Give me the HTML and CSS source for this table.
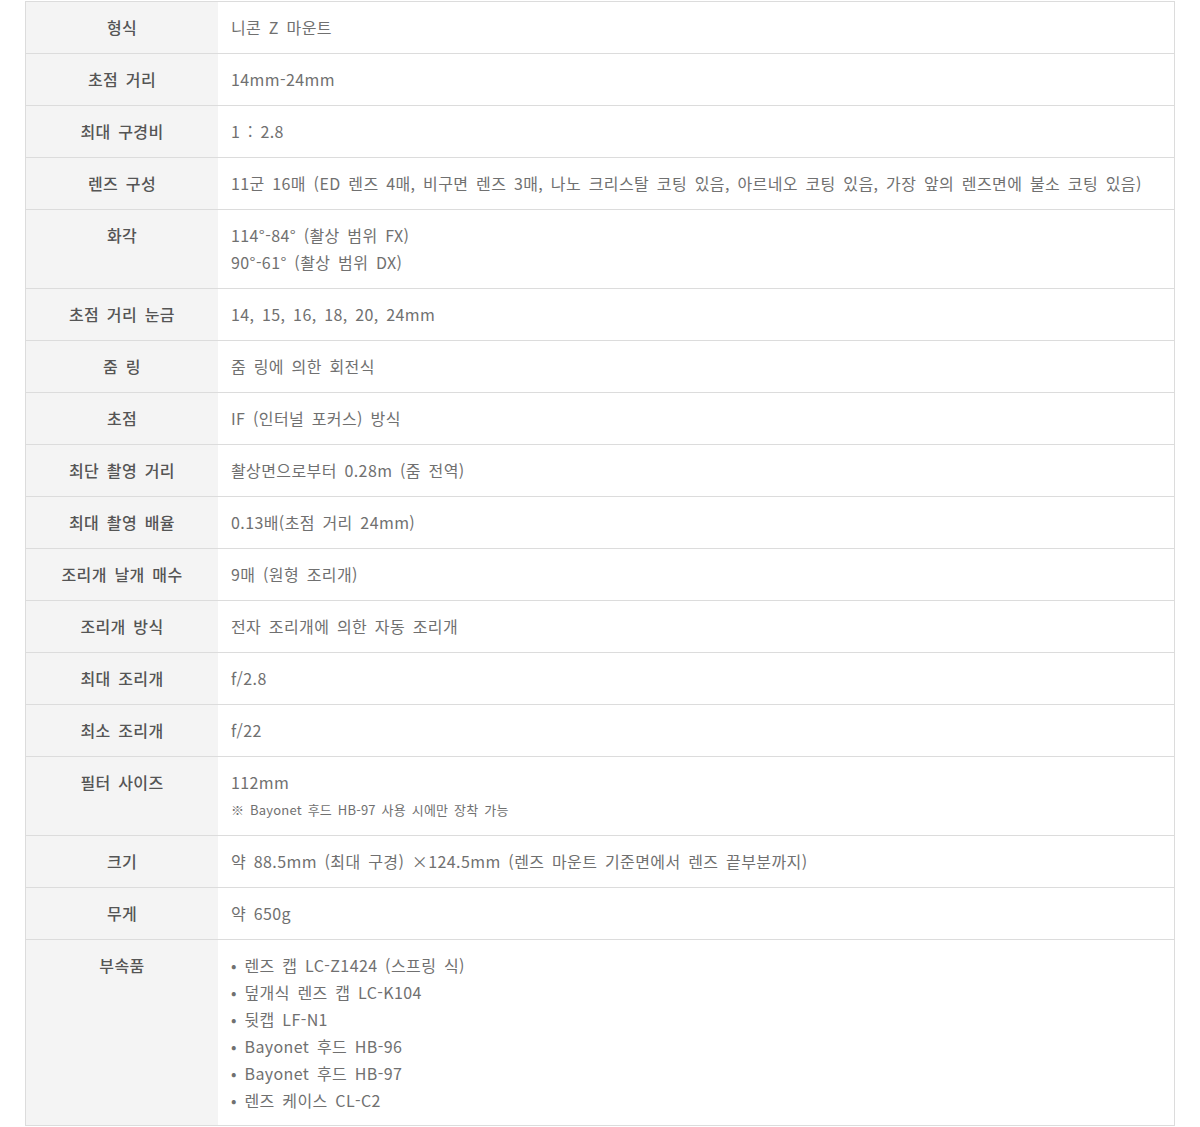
FILE: index.html
```html
<!DOCTYPE html>
<html lang="ko">
<head>
    <meta charset="UTF-8">
    <title>NIKKOR Z 14-24mm f/2.8 S 사양</title>
    <link rel="stylesheet" href="styles.css">
</head>
<body>
    <div class="spec-wrap">
        <table class="spec">
            <tbody>
                <tr><th>형식</th><td>니콘 Z 마운트</td></tr>
                <tr><th>초점 거리</th><td>14mm-24mm</td></tr>
                <tr><th>최대 구경비</th><td>1 : 2.8</td></tr>
                <tr><th>렌즈 구성</th><td>11군 16매 (ED 렌즈 4매, 비구면 렌즈 3매, 나노 크리스탈 코팅 있음, 아르네오 코팅 있음, 가장 앞의 렌즈면에 불소 코팅 있음)</td></tr>
                <tr><th>화각</th><td>114°-84° (촬상 범위 FX)<br>90°-61° (촬상 범위 DX)</td></tr>
                <tr><th>초점 거리 눈금</th><td>14, 15, 16, 18, 20, 24mm</td></tr>
                <tr><th>줌 링</th><td>줌 링에 의한 회전식</td></tr>
                <tr><th>초점</th><td>IF (인터널 포커스) 방식</td></tr>
                <tr><th>최단 촬영 거리</th><td>촬상면으로부터 0.28m (줌 전역)</td></tr>
                <tr><th>최대 촬영 배율</th><td>0.13배(초점 거리 24mm)</td></tr>
                <tr><th>조리개 날개 매수</th><td>9매 (원형 조리개)</td></tr>
                <tr><th>조리개 방식</th><td>전자 조리개에 의한 자동 조리개</td></tr>
                <tr><th>최대 조리개</th><td>f/2.8</td></tr>
                <tr><th>최소 조리개</th><td>f/22</td></tr>
                <tr><th>필터 사이즈</th><td>112mm<div class="note">※ Bayonet 후드 HB-97 사용 시에만 장착 가능</div></td></tr>
                <tr><th>크기</th><td>약 88.5mm (최대 구경) ×124.5mm (렌즈 마운트 기준면에서 렌즈 끝부분까지)</td></tr>
                <tr><th>무게</th><td>약 650g</td></tr>
                <tr>
                    <th>부속품</th>
                    <td class="last">
                        <ul class="items">
                            <li>렌즈 캡 LC-Z1424 (스프링 식)</li>
                            <li>덮개식 렌즈 캡 LC-K104</li>
                            <li>뒷캡 LF-N1</li>
                            <li>Bayonet 후드 HB-96</li>
                            <li>Bayonet 후드 HB-97</li>
                            <li>렌즈 케이스 CL-C2</li>
                        </ul>
                    </td>
                </tr>
            </tbody>
        </table>
    </div>
</body>
</html>
```

FILE: styles.css
```css
body {
    margin: 0;
    padding: 0;
    background: #fff;
    font-family: 'Noto Sans CJK KR', 'Noto Sans', sans-serif;
    color: #707070;
}

.spec-wrap {
    padding: 1px 25px 0 25px;
}

.spec {
    width: 100%;
    border-collapse: collapse;
    border: 1px solid #dcdcdc;
    font-size: 16px;
    letter-spacing: 0.4px;
    word-spacing: 2.75px;
}

.spec th, .spec td {
    border-top: 1px solid #dcdcdc;
    padding: 12px 13px;
    line-height: 27px;
    vertical-align: top;
}

.spec th {
    width: 166px;
    background: #f4f4f4;
    color: #555;
    font-weight: 500;
    text-align: center;
}

.spec td {
    text-align: left;
    font-weight: 400;
}

.spec td.last {
    padding-bottom: 11px;
}

.note {
    font-size: 13px;
    line-height: 27px;
    letter-spacing: 0.2px;
    word-spacing: 2px;
}

.items {
    list-style: none;
    margin: 0;
    padding: 0;
}

.items li::before {
    content: "• ";
}
```
